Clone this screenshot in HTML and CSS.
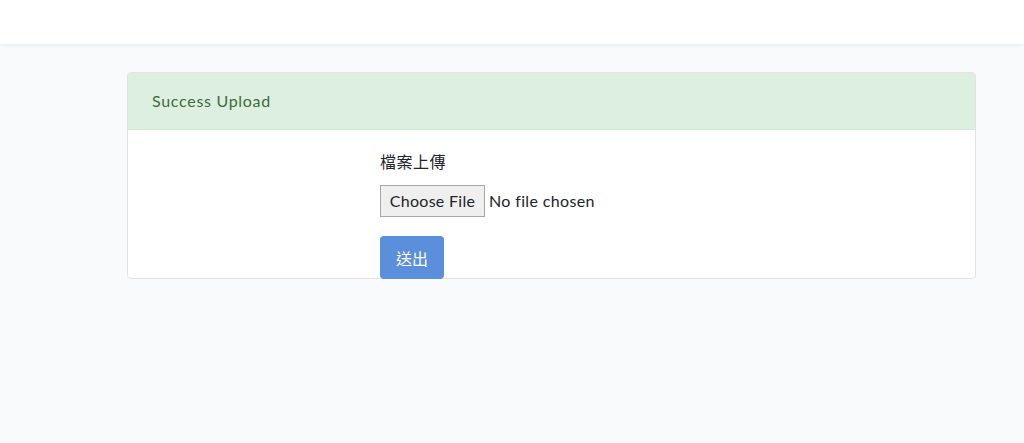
FILE: index.html
```html
<!DOCTYPE html>
<html lang="zh-Hant">
<head>
<meta charset="utf-8">
<title>Upload</title>
<link rel="stylesheet" href="styles.css">
</head>
<body>
<nav class="navbar"></nav>
<main class="main">
  <div class="card">
    <div class="card-header">Success Upload</div>
    <form class="card-body">
      <label class="field-label" for="file">檔案上傳</label>
      <input class="file-input" id="file" type="file" name="file">
      <button class="btn-primary" type="submit">送出</button>
    </form>
  </div>
</main>
</body>
</html>
```
FILE: styles.css
```css
* { box-sizing: border-box; }
html, body { margin: 0; padding: 0; }
body {
  background: #f8fafc;
  font-family: Lato, "Noto Sans CJK TC", sans-serif;
  font-size: 16px;
  color: #212529;
  height: 443px;
  overflow: hidden;
}
.navbar {
  height: 44px;
  background: #ffffff;
  box-shadow: 0 2px 4px rgba(0, 0, 0, 0.05);
}
.main {
  padding-top: 28px;
  padding-left: 127px;
}
.card {
  width: 849px;
  background: #ffffff;
  border: 1px solid #e3e3e6;
  border-radius: 4px;
}
.card-header {
  height: 57px;
  display: flex;
  align-items: center;
  padding: 0 24px 1px;
  background: #ddf0e0;
  color: #3d6a40;
  border-bottom: 1px solid #d3e8d6;
  border-radius: 3px 3px 0 0;
  font-size: 16px;
  letter-spacing: 0.7px;
}
.card-body {
  display: flex;
  flex-direction: column;
  align-items: flex-start;
  padding: 20px 0 0 252px;
  margin-bottom: -1px;
}
.field-label {
  display: block;
  line-height: 24px;
  margin-bottom: 11px;
  font-size: 16px;
  color: #212529;
  letter-spacing: 0.5px;
}
.file-input {
  font-family: Lato, "Noto Sans CJK TC", sans-serif;
  font-size: 16px;
  color: #212529;
  height: 32px;
  width: 260px;
  letter-spacing: 0.35px;
  line-height: 30px;
}
.file-input::file-selector-button {
  font-family: Lato, sans-serif;
  font-size: 16px;
  color: #212529;
  height: 32px;
  padding: 0 0 2px;
  width: 105px;
  margin-right: 4px;
  background: #efefef;
  border: 1px solid #a7a7a7;
  border-radius: 0;
  letter-spacing: 0.3px;
}
.btn-primary {
  margin-top: 19px;
  height: 43px;
  width: 64px;
  padding: 0;
  border: none;
  border-radius: 4px;
  background: #5b8fdc;
  color: #ffffff;
  font-family: Lato, "Noto Sans CJK TC", sans-serif;
  font-size: 16px;
}
```
